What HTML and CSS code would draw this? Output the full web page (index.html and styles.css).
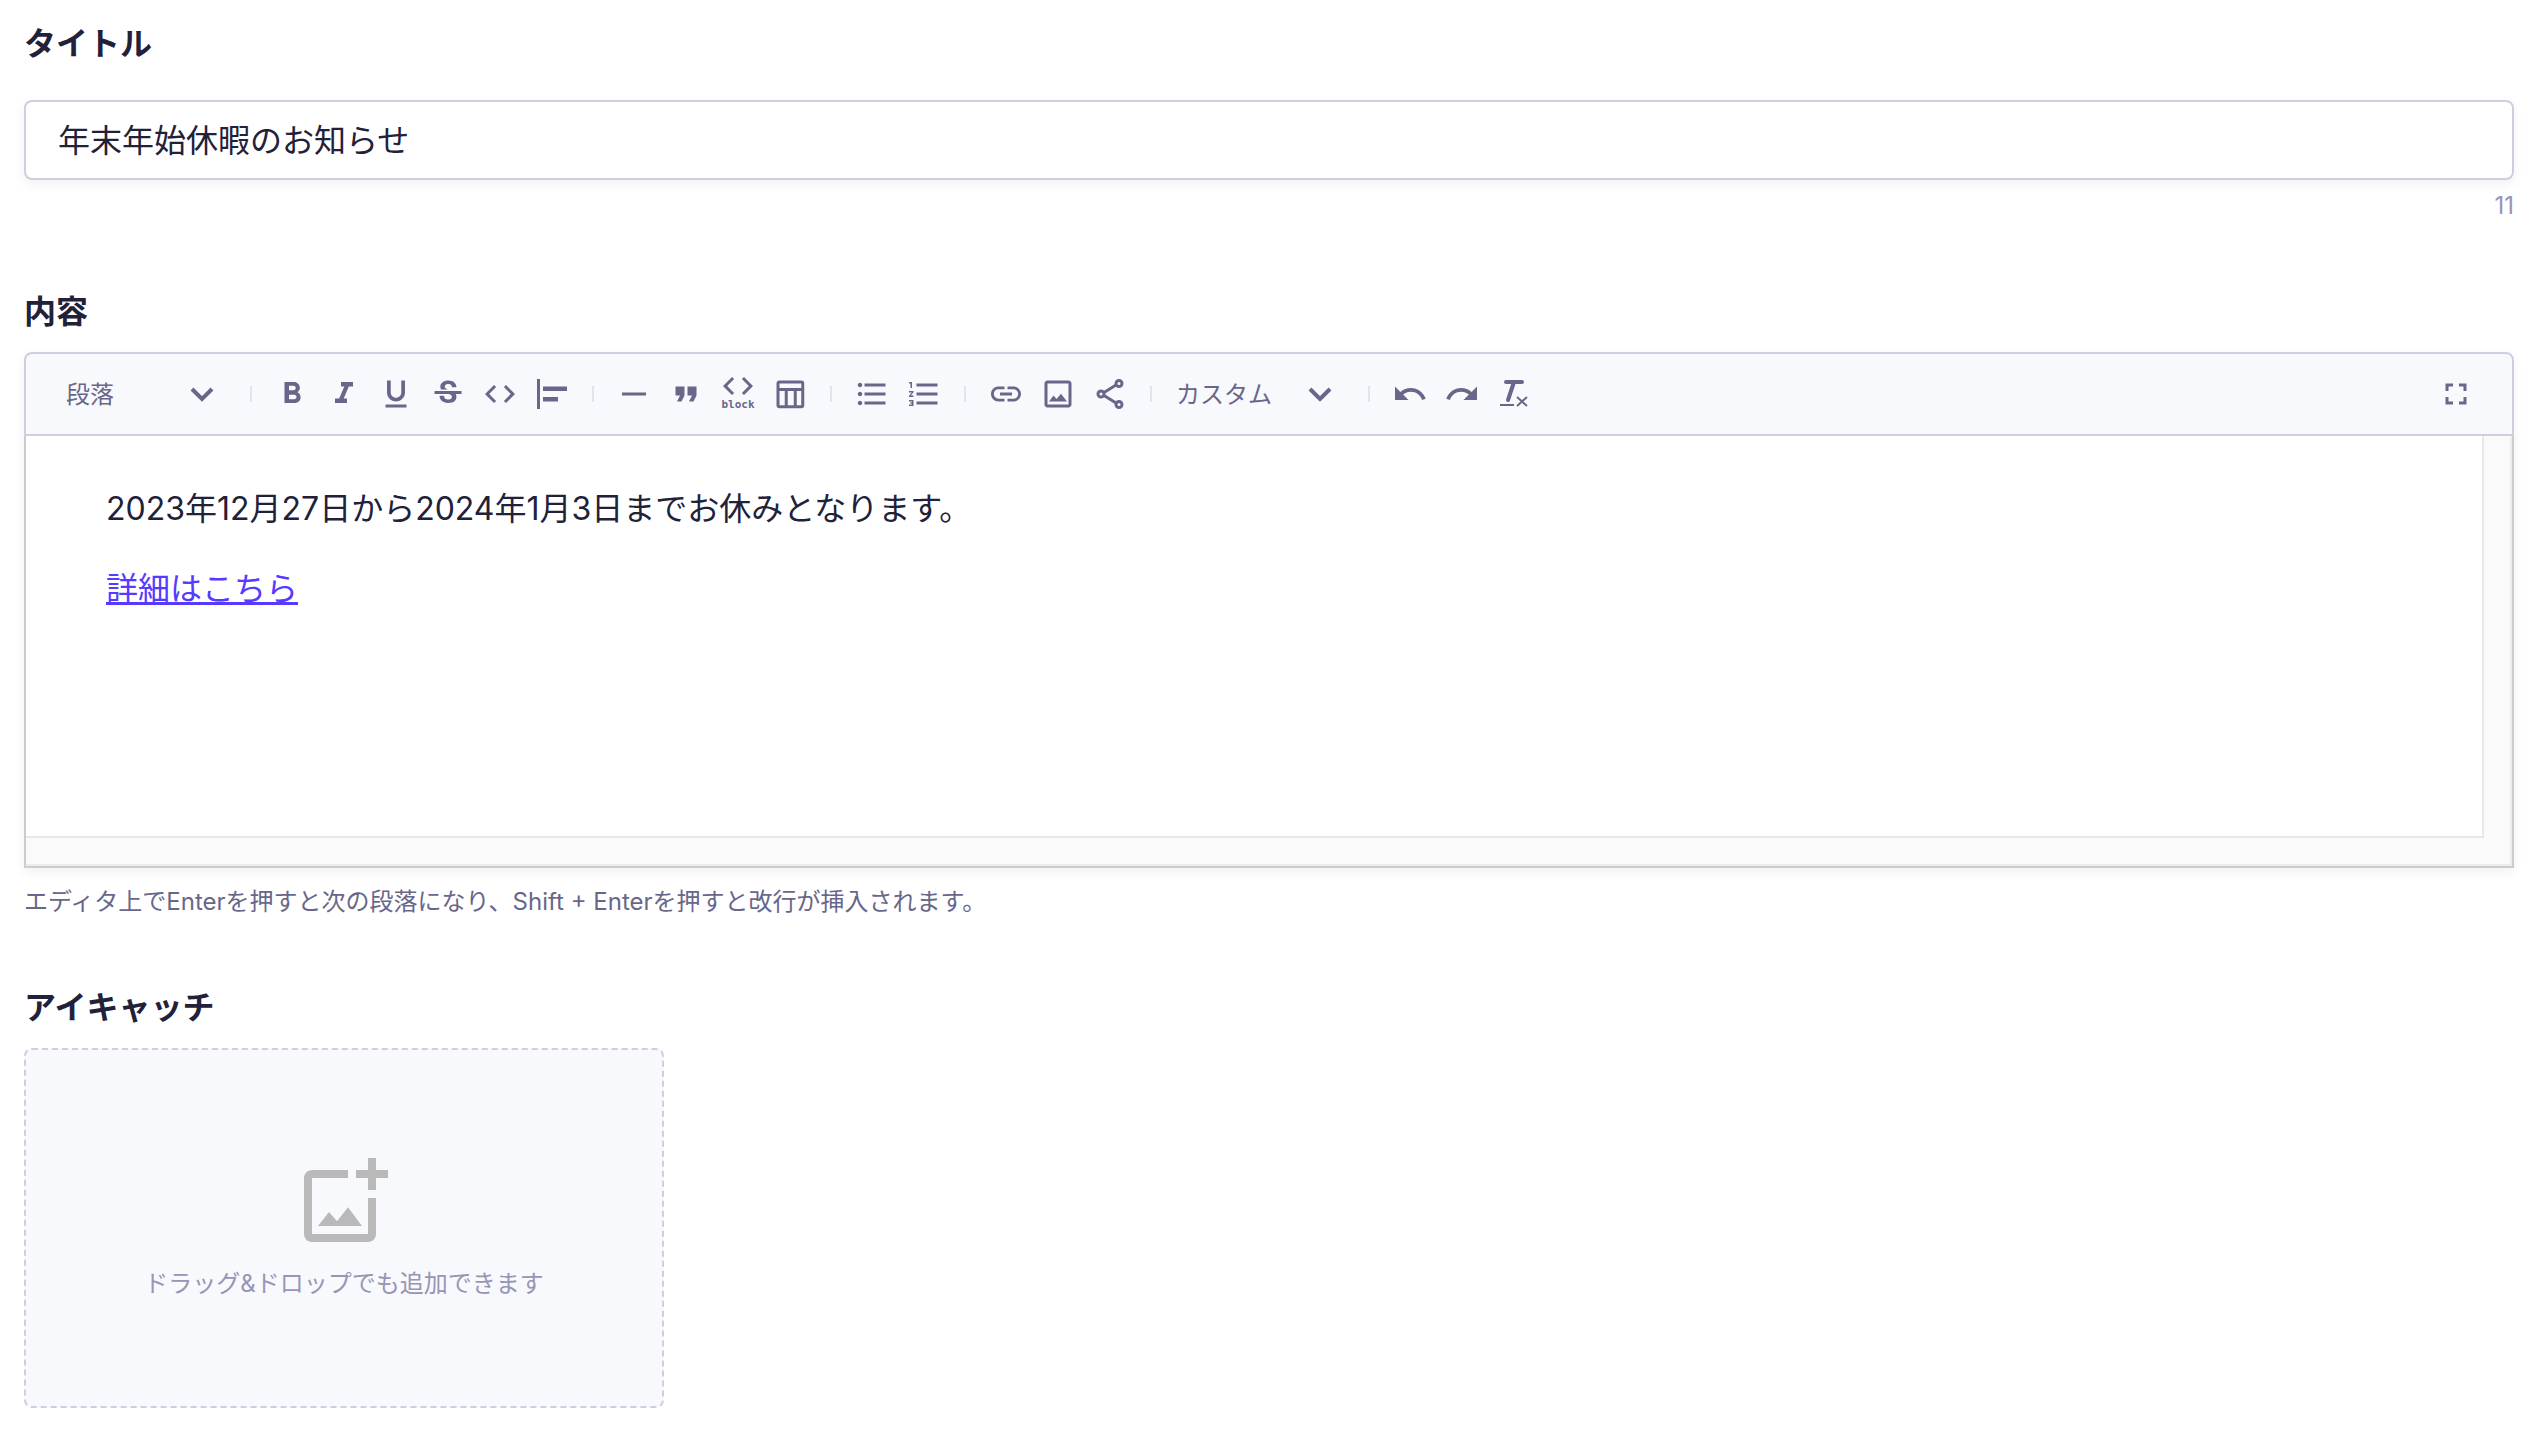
FILE: index.html
```html
<!DOCTYPE html>
<html lang="ja">
<head>
  <meta charset="UTF-8">
  <meta name="viewport" content="width=device-width, initial-scale=1.0">
  <title>お知らせの編集</title>
  <link rel="stylesheet" href="styles.css">
</head>
<body>

<form class="entry-form">
  <section class="field">
    <label class="field-label field-label-wide" for="title">タイトル</label>
    <input class="text-input" type="text" id="title" value="年末年始休暇のお知らせ">
    <p class="counter">11</p>
  </section>

  <section class="field">
    <h2 class="field-label" id="contentLabel">内容</h2>
    <div class="editor">
      <div class="toolbar">
        <div class="picker picker-block">
          <select aria-label="段落スタイル">
            <option>段落</option>
            <option>見出し</option>
          </select>
          <svg class="chevron" viewBox="0 0 24 16"><path d="M2 3l10 10L22 3"/></svg>
        </div>
        <span class="separator"></span>

        <button type="button" class="tool" aria-label="太字">
          <svg class="icon" viewBox="0 0 24 24"><path d="M15.600 10.790c.97-.67 1.650-1.770 1.650-2.790 0-2.260-1.750-4-4-4H7v14h7.040c2.090 0 3.710-1.700 3.710-3.790 0-1.520-.86-2.820-2.150-3.420zM10 6.500h3c.83 0 1.500.67 1.500 1.500s-.67 1.500-1.500 1.500h-3v-3zm3.500 9H10v-3h3.500c.83 0 1.500.67 1.500 1.500s-.67 1.500-1.500 1.500z"/></svg>
        </button>
        <button type="button" class="tool" aria-label="斜体">
          <svg class="icon" viewBox="0 0 24 24"><path d="M10 4v3h2.210l-3.420 8H6v3h8v-3h-2.210l3.420-8H18V4z"/></svg>
        </button>
        <button type="button" class="tool" aria-label="下線">
          <svg class="icon" viewBox="0 0 24 24"><path d="M12 17c3.310 0 6-2.690 6-6V3h-2.500v8c0 1.930-1.570 3.500-3.500 3.500S8.500 12.930 8.500 11V3H6v8c0 3.310 2.690 6 6 6zm-7 2v2h14v-2H5z"/></svg>
        </button>
        <button type="button" class="tool" aria-label="取り消し線">
          <svg class="icon" viewBox="0 0 24 24"><path d="M7.240 8.750c-.26-.48-.39-1.030-.39-1.670 0-.61.13-1.160.4-1.670.26-.5.63-.93 1.110-1.290.48-.35 1.050-.63 1.700-.83.66-.19 1.390-.29 2.180-.29.81 0 1.540.11 2.210.34.66.22 1.230.54 1.690.94.47.4.83.88 1.080 1.430.25.55.38 1.150.38 1.810h-3.010c0-.31-.05-.59-.15-.85-.09-.27-.24-.49-.44-.68-.2-.19-.45-.33-.75-.44-.3-.1-.66-.16-1.060-.16-.39 0-.74.04-1.030.13-.29.09-.53.21-.72.36-.19.16-.34.34-.44.55-.1.21-.15.43-.15.66 0 .48.25.88.74 1.210.38.25.77.48 1.410.7H7.390c-.05-.08-.11-.17-.15-.25zM21 12v-2H3v2h9.620c.18.07.4.14.55.2.37.17.66.34.87.51.21.17.35.36.43.57.07.2.11.43.11.69 0 .23-.05.45-.14.66-.09.2-.23.38-.42.53-.19.15-.42.26-.71.35-.29.08-.63.13-1.010.13-.43 0-.83-.04-1.180-.13s-.66-.23-.91-.42c-.25-.19-.45-.44-.59-.75-.14-.31-.25-.76-.25-1.210H6.400c0 .55.08 1.130.24 1.580.16.45.37.85.65 1.210.28.35.6.66.98.92.37.26.78.48 1.220.65.44.17.9.3 1.380.39.48.08.96.13 1.440.13.8 0 1.530-.09 2.180-.28s1.210-.45 1.670-.79c.46-.34.82-.77 1.070-1.270s.38-1.070.38-1.710c0-.6-.1-1.140-.31-1.610-.05-.11-.11-.23-.17-.33H21z"/></svg>
        </button>
        <button type="button" class="tool" aria-label="コード">
          <svg class="icon" viewBox="0 0 24 24"><path d="M9.400 16.600L4.800 12l4.600-4.600L8 6l-6 6 6 6 1.400-1.400zm5.200 0l4.600-4.600-4.600-4.600L16 6l6 6-6 6-1.400-1.400z"/></svg>
        </button>
        <button type="button" class="tool" aria-label="左揃え">
          <svg class="icon" viewBox="0 0 24 24"><path d="M2 2h2v20H2zM6 7h16v3H6zM6 14h10v3H6z"/></svg>
        </button>
        <span class="separator"></span>

        <button type="button" class="tool" aria-label="水平線">
          <svg class="icon" viewBox="0 0 24 24"><path d="M4 11h16v2H4z"/></svg>
        </button>
        <button type="button" class="tool" aria-label="引用">
          <svg class="icon" viewBox="0 0 24 24"><path d="M6 17h3l2-4V7H5v6h3zm8 0h3l2-4V7h-6v6h3z"/></svg>
        </button>
        <button type="button" class="tool tool-block">
          <svg class="icon-code" viewBox="0 6 24 12"><path d="M9.400 16.600L4.800 12l4.600-4.600L8 6l-6 6 6 6 1.400-1.400zm5.200 0l4.600-4.600-4.600-4.600L16 6l6 6-6 6-1.400-1.400z"/></svg>
          <span>block</span>
        </button>
        <button type="button" class="tool" aria-label="表">
          <svg class="icon" viewBox="0 0 24 24"><path class="line" d="M5 4h14.500q1 0 1 1v14.500q0 1-1 1H5q-1 0-1-1V5q0-1 1-1zM4 9h16.500M9.500 9v11.500M15.500 9v11.500"/></svg>
        </button>
        <span class="separator"></span>

        <button type="button" class="tool" aria-label="箇条書き">
          <svg class="icon" viewBox="0 0 24 24"><path d="M4 10.500c-.83 0-1.500.67-1.500 1.500s.67 1.500 1.500 1.500 1.500-.67 1.500-1.500-.67-1.500-1.500-1.500zm0-6c-.83 0-1.500.67-1.500 1.500S3.170 7.500 4 7.500 5.500 6.830 5.500 6 4.830 4.500 4 4.500zm0 12c-.83 0-1.500.68-1.500 1.500s.68 1.500 1.500 1.500 1.500-.68 1.500-1.500-.67-1.500-1.500-1.500zM7 19h14v-2H7v2zm0-6h14v-2H7v2zm0-8v2h14V5H7z"/></svg>
        </button>
        <button type="button" class="tool" aria-label="番号付きリスト">
          <svg class="icon" viewBox="0 0 24 24"><path d="M2 17h2v.5H3v1h1v.5H2v1h3v-4H2v1zm1-9h1V4H2v1h1v3zm-1 3h1.800L2 13.100v.9h3v-1H3.200L5 10.900V10H2v1zm5-6v2h14V5H7zm0 14h14v-2H7v2zm0-6h14v-2H7v2z"/></svg>
        </button>
        <span class="separator"></span>

        <button type="button" class="tool" aria-label="リンク">
          <svg class="icon" viewBox="0 0 24 24"><path d="M3.900 12c0-1.710 1.390-3.100 3.100-3.100h4V7H7c-2.760 0-5 2.240-5 5s2.240 5 5 5h4v-1.900H7c-1.710 0-3.100-1.390-3.100-3.100zM8 13h8v-2H8v2zm9-6h-4v1.900h4c1.710 0 3.100 1.390 3.100 3.100s-1.390 3.100-3.100 3.100h-4V17h4c2.760 0 5-2.240 5-5s-2.240-5-5-5z"/></svg>
        </button>
        <button type="button" class="tool" aria-label="画像">
          <svg class="icon" viewBox="0 0 24 24"><path d="M19 5v14H5V5h14m0-2H5c-1.100 0-2 .9-2 2v14c0 1.100.9 2 2 2h14c1.100 0 2-.9 2-2V5c0-1.100-.9-2-2-2zM6 17l3-4 2 2.400 3-3.600 4 5.200z"/></svg>
        </button>
        <button type="button" class="tool" aria-label="埋め込み">
          <svg class="icon" viewBox="0 0 24 24"><g class="line"><circle cx="18" cy="5" r="2"/><circle cx="6" cy="12" r="2"/><circle cx="18" cy="19" r="2"/><path d="M8 11l8-5M8 13l8 5"/></g></svg>
        </button>
        <span class="separator"></span>

        <div class="picker picker-custom">
          <select aria-label="カスタムクラス">
            <option>カスタム</option>
          </select>
          <svg class="chevron" viewBox="0 0 24 16"><path d="M2 3l10 10L22 3"/></svg>
        </div>
        <span class="separator"></span>

        <button type="button" class="tool" aria-label="元に戻す">
          <svg class="icon" viewBox="0 0 24 24"><path d="M12.500 8c-2.650 0-5.050.99-6.900 2.600L2 7v9h9l-3.620-3.620c1.390-1.160 3.160-1.880 5.120-1.880 3.540 0 6.550 2.310 7.600 5.500l2.370-.78C21.080 11.030 17.150 8 12.500 8z"/></svg>
        </button>
        <button type="button" class="tool" aria-label="やり直す">
          <svg class="icon" viewBox="0 0 24 24"><path d="M18.400 10.600C16.550 8.990 14.150 8 11.500 8c-4.650 0-8.580 3.030-9.960 7.220L3.900 16c1.050-3.190 4.050-5.500 7.600-5.500 1.950 0 3.730.72 5.120 1.880L13 16h9V7l-3.600 3.600z"/></svg>
        </button>
        <button type="button" class="tool" aria-label="書式をクリア">
          <svg class="icon" viewBox="0 0 36 36"><path class="clear-t" d="M10 6h16M18 6l-6 18"/><path class="line" d="M4 29h14M21 21l10 9M31 21l-10 9"/></svg>
        </button>

        <button type="button" class="tool tool-right" aria-label="全画面">
          <svg class="icon" viewBox="0 0 24 24"><path d="M7 14H5v5h5v-2H7v-3zm-2-4h2V7h3V5H5v5zm12 7h-3v2h5v-5h-2v3zM14 5v2h3v3h2V5h-5z"/></svg>
        </button>
      </div>
      <div class="editor-body">
        <div class="content" contenteditable="true" spellcheck="false" role="textbox" aria-labelledby="contentLabel">
          <p>2023年12月27日から2024年1月3日までお休みとなります。</p>
          <p><a href="#">詳細はこちら</a></p>
        </div>
      </div>
    </div>
    <p class="help">エディタ上でEnterを押すと次の段落になり、Shift + Enterを押すと改行が挿入されます。</p>
  </section>

  <section class="field">
    <h2 class="field-label">アイキャッチ</h2>
    <label class="dropzone" for="eyecatch">
      <svg class="add-image" viewBox="-2 -1 24 24"><path d="M11 3H2C.9 3 0 3.900 0 5v14c0 1.100.9 2 2 2h14c1.100 0 2-.9 2-2v-9h-2v9H2V5h9zM16 0h2v3h3v2h-3v3h-2V5h-3V3h3zM3.500 17l2.750-3.500 2 2.300 2.750-3.500 3.500 4.700z"/></svg>
      <span>ドラッグ&amp;ドロップでも追加できます</span>
    </label>
    <input type="file" id="eyecatch" accept="image/*" hidden>
  </section>
</form>

</body>
</html>
```

FILE: styles.css
```css
* {
    box-sizing: border-box;
}
body {
    font-family: Inter, "Noto Sans CJK JP", sans-serif;
    margin: 0;
    padding: 20px 26px 20px 24px;
    background-color: #fff;
    color: #212139;
}
p, h2 {
    margin: 0;
}
.field {
    margin-bottom: 64px;
}
.field:last-child {
    margin-bottom: 0;
}
.field-label {
    display: block;
    margin-bottom: 16px;
    font-size: 32px;
    line-height: 48px;
    font-weight: bold;
}
.field-label-wide {
    margin-bottom: 32px;
}

/* タイトル */
.text-input {
    display: block;
    width: 100%;
    height: 80px;
    padding: 0 32px 4px;
    border: 2px solid #d0cde1;
    border-radius: 8px;
    background: #fff;
    box-shadow: 0 4px 12px rgba(0, 0, 0, 0.06);
    color: inherit;
    font-family: inherit;
    font-size: 32px;
}
.counter {
    padding-top: 8px;
    color: #9795b5;
    font-size: 24px;
    line-height: 36px;
    text-align: right;
}

/* エディタ */
.editor {
    border-radius: 8px 8px 0 0;
    box-shadow: 0 4px 12px rgba(0, 0, 0, 0.06);
}
.toolbar {
    display: flex;
    align-items: center;
    height: 84px;
    padding: 0 30px;
    border: 2px solid #d0cde1;
    border-radius: 8px 8px 0 0;
    background: #f8f9fd;
    color: #686789;
}
.picker {
    display: grid;
    align-items: center;
}
.picker-block {
    width: 180px;
}
.picker-custom {
    width: 188px;
}
.picker select {
    grid-area: 1 / 1;
    width: 100%;
    height: 48px;
    padding: 0 10px;
    border: 0;
    background: none;
    appearance: none;
    color: inherit;
    font-family: inherit;
    font-size: 24px;
}
.chevron {
    grid-area: 1 / 1;
    justify-self: end;
    width: 24px;
    height: 16px;
    margin-right: 22px;
    fill: none;
    stroke: currentColor;
    stroke-width: 4;
    pointer-events: none;
}
.separator {
    width: 2px;
    height: 16px;
    margin: 0 14px;
    background: #e3e2ef;
}
.tool {
    display: flex;
    align-items: center;
    justify-content: center;
    width: 52px;
    height: 52px;
    padding: 0;
    border: 0;
    background: none;
    color: inherit;
    cursor: pointer;
}
.tool-block {
    flex-direction: column;
    gap: 4px;
    font: bold 11px/12px "DejaVu Sans Mono", monospace;
}
.tool-right {
    margin-left: auto;
}
.icon {
    width: 36px;
    height: 36px;
    fill: currentColor;
}
.icon-code {
    width: 36px;
    height: 18px;
    fill: currentColor;
}
.line {
    fill: none;
    stroke: currentColor;
    stroke-width: 2;
}
.clear-t {
    fill: none;
    stroke: currentColor;
    stroke-width: 4;
    stroke-linecap: round;
}
.editor-body {
    padding: 0 28px 28px 0;
    border: 2px solid #ccc;
    border-top: 0;
    background: #fafafa;
    box-shadow: inset -2px -2px 0 #ededed;
}
.content {
    min-height: 402px;
    padding: 45px 80px;
    border: solid #e8e8e8;
    border-width: 0 2px 2px 0;
    background: #fff;
    font-size: 32px;
    line-height: 56px;
    outline: none;
}
.content p {
    margin-bottom: 24px;
}
.content a {
    color: #563bff;
    text-decoration-thickness: 3px;
}
.help {
    margin-top: 16px;
    color: #686789;
    font-size: 24px;
    line-height: 36px;
}

/* アイキャッチ */
.dropzone {
    display: flex;
    flex-direction: column;
    align-items: center;
    justify-content: center;
    gap: 16px;
    max-width: 640px;
    height: 360px;
    border: 2px dashed #d0cde1;
    border-radius: 8px;
    background: #f8f9fd;
    color: #9795b5;
    font-size: 24px;
    line-height: 36px;
    cursor: pointer;
}
.add-image {
    width: 96px;
    height: 96px;
    fill: #b9b9b9;
}
```
